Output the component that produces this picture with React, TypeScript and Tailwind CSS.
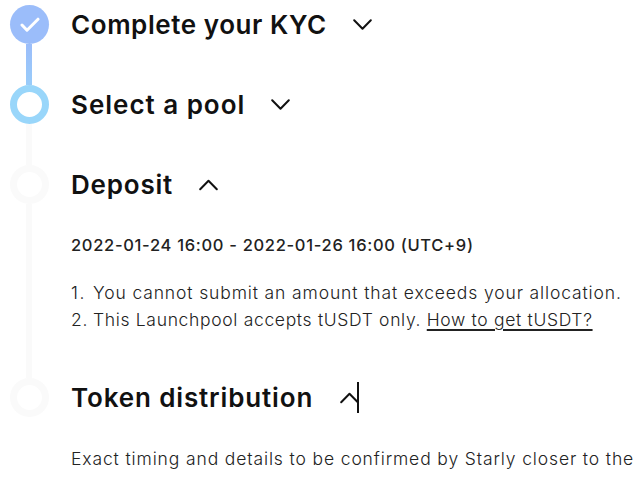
import React from 'react';

interface StepProps {
  title: string;
  status: 'done' | 'current' | 'pending';
  open?: boolean;
  caret?: boolean;
  last?: boolean;
  heightClass: string;
  titleClass: string;
  children?: React.ReactNode;
}

const Chevron: React.FC<{ open?: boolean }> = ({ open }) => (
  <svg width="20" height="12" viewBox="0 0 20 12" fill="none" stroke="#111" strokeWidth="2" strokeLinecap="round" strokeLinejoin="round">
    <path d={open ? 'M1.2 10.2 9.5 1.7l8.3 8.5' : 'M1.2 1.3 9.5 9.8l8.3-8.5'} />
  </svg>
);

const Marker: React.FC<{ status: StepProps['status'] }> = ({ status }) => {
  if (status === 'done') {
    return (
      <div className="size-[39px] shrink-0 rounded-full bg-[#9bbdfa] flex items-center justify-center">
        <svg width="20" height="16" viewBox="0 0 20 16" fill="none" stroke="#fff" strokeWidth="3" strokeLinecap="round" strokeLinejoin="round">
          <path d="M2 8l5 5.2L18 2.2" />
        </svg>
      </div>
    );
  }
  return (
    <div
      className={`size-[39px] shrink-0 rounded-full border-[7px] ${
        status === 'current' ? 'border-[#99d6fa]' : 'border-[#fafafa]'
      }`}
    />
  );
};

const Step: React.FC<StepProps> = ({ title, status, open, caret, last, heightClass, titleClass, children }) => (
  <section className={`flex gap-[22px] ${heightClass}`}>
    <div className="flex w-[39px] shrink-0 flex-col">
      <Marker status={status} />
      {!last && (
        <div className={`ml-[16px] w-[6px] flex-1 ${status === 'done' ? 'bg-linear-to-b from-[#9bbdfa] to-[#99ccfa]' : 'bg-[#fafafa]'}`} />
      )}
    </div>
    <div className="flex-1 whitespace-nowrap">
      <div className="flex h-[39px] items-center">
        <h2 className={`shrink-0 pt-px text-[26px] leading-[38px] font-semibold text-[#111] ${titleClass}`}>{title}</h2>
        <Chevron open={open} />
        {caret && <div className="-ml-[3px] h-[31px] w-[2px] bg-[#111]" />}
      </div>
      {children}
    </div>
  </section>
);

export default function App() {
  return (
    <main className="h-[480px] w-[633px] overflow-hidden bg-white pl-[10px] pt-[5px] font-['Inter',sans-serif]">
      <Step title="Complete your KYC" status="done" heightClass="h-[80px]" titleClass="w-[282px] tracking-[0.57px]" />
      <Step title="Select a pool" status="current" heightClass="h-[80px]" titleClass="w-[200px] tracking-[0.98px]" />
      <Step title="Deposit" status="pending" open heightClass="h-[213px]" titleClass="w-[128px] tracking-[0.8px]">
        <p className="mt-[27px] text-[16.5px] font-medium leading-[28px] tracking-[0.69px] text-[#222]">
          2022-01-24 16:00 - 2022-01-26 16:00 (UTC+9)
        </p>
        <ol className="mt-[20px] text-[17.5px] font-light leading-[27px] text-[#222]">
          <li className="flex">
            <span className="w-[22px] tracking-[1.6px]">1.</span>
            <span className="tracking-[0.87px]">You cannot submit an amount that exceeds your allocation.</span>
          </li>
          <li className="flex">
            <span className="w-[22px] tracking-[0.7px]">2.</span>
            <span className="tracking-[0.67px]">
              This Launchpool accepts tUSDT only.{' '}
              <a className="underline decoration-[1.5px] underline-offset-[3px]">How to get tUSDT?</a>
            </span>
          </li>
        </ol>
      </Step>
      <Step title="Token distribution" status="pending" open caret last heightClass="h-[102px]" titleClass="w-[269px] tracking-[0.86px]">
        <p className="mt-[28px] text-[17.5px] font-light leading-[28px] tracking-[0.87px] text-[#222]">
          Exact timing and details to be confirmed by Starly closer to the
        </p>
      </Step>
    </main>
  );
}
